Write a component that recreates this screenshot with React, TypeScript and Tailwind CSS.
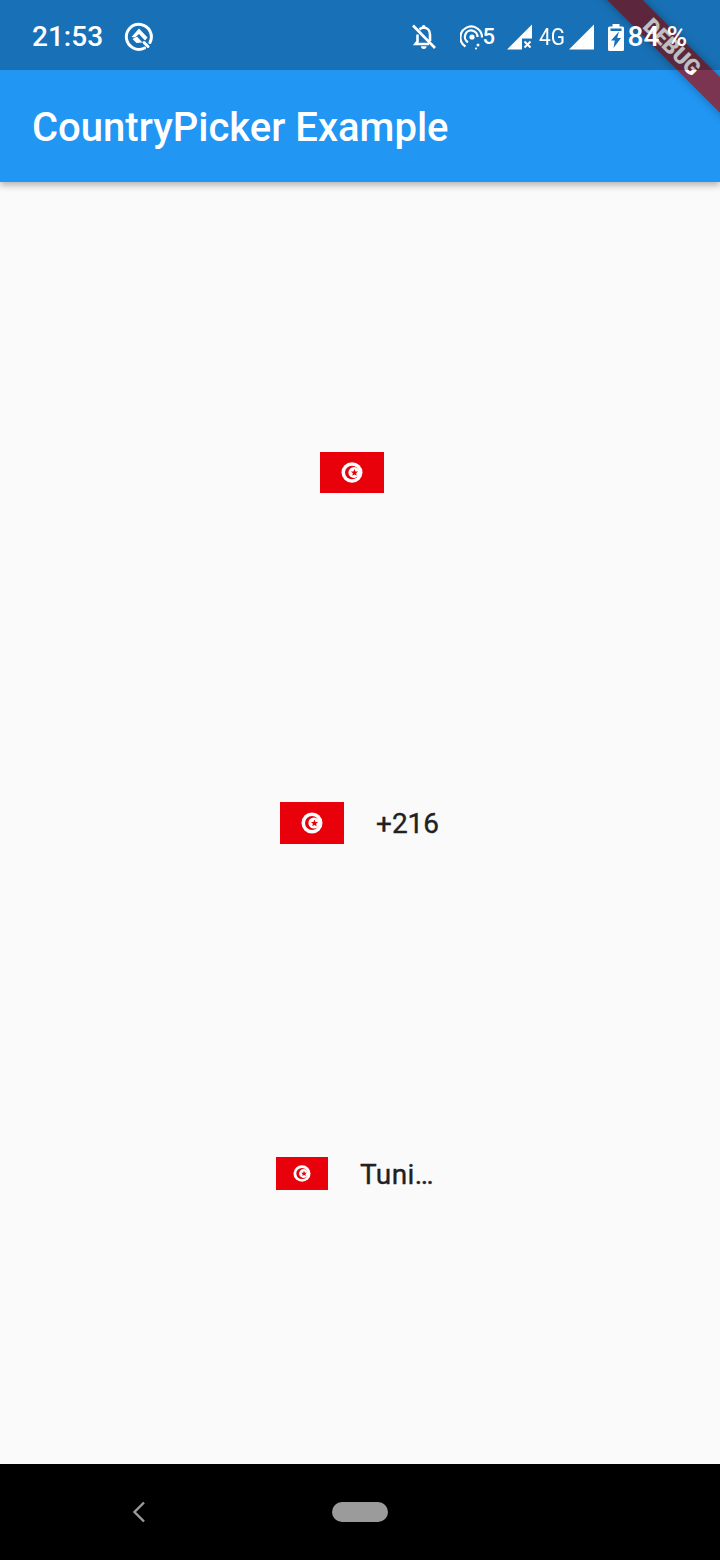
import React from 'react';

function Flag({ w, h }: { w: number; h: number }) {
  return (
    <svg width={w} height={h} viewBox="0 0 64 42" preserveAspectRatio="none" className="shrink-0">
      <rect width="64" height="42" fill="#e8000b" />
      <g style={{ filter: 'blur(0.7px)' }}>
        <circle cx="32" cy="21" r="10.5" fill="#fff" />
        <circle cx="32" cy="21" r="7" fill="#e8000b" />
        <circle cx="34" cy="21" r="5.6" fill="#fff" />
        <path d="M34.5 17.5l1 2.4 2.6.2-2 1.7.6 2.5-2.2-1.3-2.2 1.3.6-2.5-2-1.7 2.6-.2z" fill="#e8000b" />
      </g>
    </svg>
  );
}

export default function App() {
  return (
    <div className="relative w-[720px] h-[1560px] overflow-hidden flex flex-col bg-[#fafafa] font-['Roboto',sans-serif]">
      {/* App bar runs under the status bar */}
      <header className="h-[182px] shrink-0 bg-[#2196f3] flex items-center px-8 pt-[74px] shadow-[0_3px_7px_rgba(0,0,0,0.3)] z-10">
        <h1 className="text-[40px] leading-[48px] font-medium text-white">CountryPicker Example</h1>
      </header>

      {/* Pickers */}
      <main className="flex-1 flex flex-col items-center justify-center gap-[308.5px] text-[#212121]">
        <div className="h-[42px] flex items-center justify-center">
          <Flag w={64} h={41} />
          <div className="w-4" />
        </div>
        <div className="h-[42px] flex items-center justify-center">
          <Flag w={64} h={42} />
          <span className="ml-8 mt-[2px] w-[64px] text-[28px] leading-[32px] [-webkit-text-stroke:0.35px_#212121]">+216</span>
        </div>
        <div className="h-[42px] flex items-center justify-center">
          <Flag w={52} h={33} />
          <span className="ml-8 mt-[2px] w-[84px] text-[28px] leading-[32px] tracking-[0.4px] [-webkit-text-stroke:0.35px_#212121] truncate">Tunisia</span>
        </div>
      </main>

      {/* Navigation bar */}
      <nav className="relative h-[96px] shrink-0 bg-black flex items-center justify-center">
        <svg width="14" height="22" viewBox="0 0 14 22" fill="none" className="absolute left-[132px] top-[37px]">
          <path d="M12 1.500L2.500 11 12 20.500" stroke="#9b9b9b" strokeWidth="2.400" />
        </svg>
        <div className="w-14 h-5 rounded-full bg-[#9b9b9b]" />
      </nav>

      {/* Debug banner */}
      <div className="absolute top-[47px] left-[672px] -translate-x-1/2 -translate-y-1/2 w-[220px] h-[25px] rotate-45 bg-[#7b3550] shadow-[0_0_10px_rgba(0,0,0,0.3)] flex items-center justify-center z-20">
        <span className="text-[22px] leading-[22px] font-black text-white">DEBUG</span>
      </div>

      {/* Status bar */}
      <div className="absolute top-0 left-0 w-[720px] h-[70px] bg-black/25 text-white flex items-center justify-between pl-8 pr-[33px] pt-1 z-30">
        <div className="flex items-center gap-[21px]">
          <span className="text-[28px] leading-[32px] font-medium">21:53</span>
          <svg width="30" height="30" viewBox="0 0 30 30" fill="none">
            <path d="M20.500 26A12.500 12.500 0 1 1 26 20.500" stroke="#fff" strokeWidth="3" strokeLinecap="round" />
            <path d="M15 6.500l8.500 9-2.500 3-6-6.500-4 3.500-3.500-.5z" fill="#fff" />
            <path d="M8.500 17l4.500-2.500 5.500 6-6 .5z" fill="#fff" />
            <path d="M20 20.500l4 4" stroke="#fff" strokeWidth="3" strokeLinecap="round" />
          </svg>
        </div>
        <div className="flex items-center">
          {/* bell off */}
          <svg width="24" height="26" viewBox="0 0 24 26" fill="none" className="mr-6">
            <path d="M7.500 5.500A6.500 6.500 0 0 1 11.500 3.500c4 .2 6.500 3.200 6.500 7v6.500M5.500 10.500v7L3.500 20h13.500" stroke="#fff" strokeWidth="2.600" />
            <rect x="10" y="1" width="3.400" height="3.400" rx="1.500" fill="#fff" />
            <path d="M9 22.300h5.500a2.750 2.750 0 0 1-5.500 0z" fill="#fff" />
            <path d="M1 1.500l22 22.500" stroke="#fff" strokeWidth="2.600" />
          </svg>
          {/* hotspot */}
          <svg width="23" height="26" viewBox="0 0 23 26" fill="none">
            <path d="M5.500 22.500A10.800 10.800 0 1 1 22 13.500" stroke="#fff" strokeWidth="2.200" />
            <path d="M8 18.200A6.300 6.300 0 1 1 17.500 13" stroke="#fff" strokeWidth="2.200" />
            <circle cx="12" cy="13" r="2.600" fill="#fff" />
            <circle cx="18" cy="21" r="1.500" fill="#fff" />
            <circle cx="16" cy="24.500" r="1.100" fill="#fff" />
          </svg>
          <span className="text-[22px] leading-[26px] font-medium w-[12px] mr-3">5</span>
          {/* signal with x */}
          <svg width="25" height="26" viewBox="0 0 25 26" className="mr-[7px]">
            <path d="M0 25.500L25 .5v14H15v11z" fill="#fff" />
            <path d="M17.500 17.500l6 6M23.500 17.500l-6 6" stroke="#fff" strokeWidth="2" />
          </svg>
          <span className="text-[24px] leading-[26px] w-[30px] scale-x-[0.87] origin-left">4G</span>
          {/* signal */}
          <svg width="25" height="26" viewBox="0 0 25 26" className="mr-[14px]">
            <path d="M0 25.500L25 .5v25z" fill="#fff" />
          </svg>
          {/* battery charging */}
          <svg width="16" height="27" viewBox="0 0 16 27" className="mr-1">
            <path d="M4.500 0h7v2.500h3a1.500 1.500 0 0 1 1.500 1.500V25.500a1.500 1.500 0 0 1-1.500 1.500H1.500A1.500 1.500 0 0 1 0 25.500V4a1.500 1.500 0 0 1 1.500-1.500h3z" fill="#fff" />
            <path d="M2.500 4.500h11V7h-11z" fill="#1970b6" />
            <path d="M11 7.500L3 16.500h3.800L5.500 24l7.500-10H9.200z" fill="#1970b6" />
          </svg>
          <span className="text-[28px] leading-[32px] font-medium">84 %</span>
        </div>
      </div>
    </div>
  );
}
